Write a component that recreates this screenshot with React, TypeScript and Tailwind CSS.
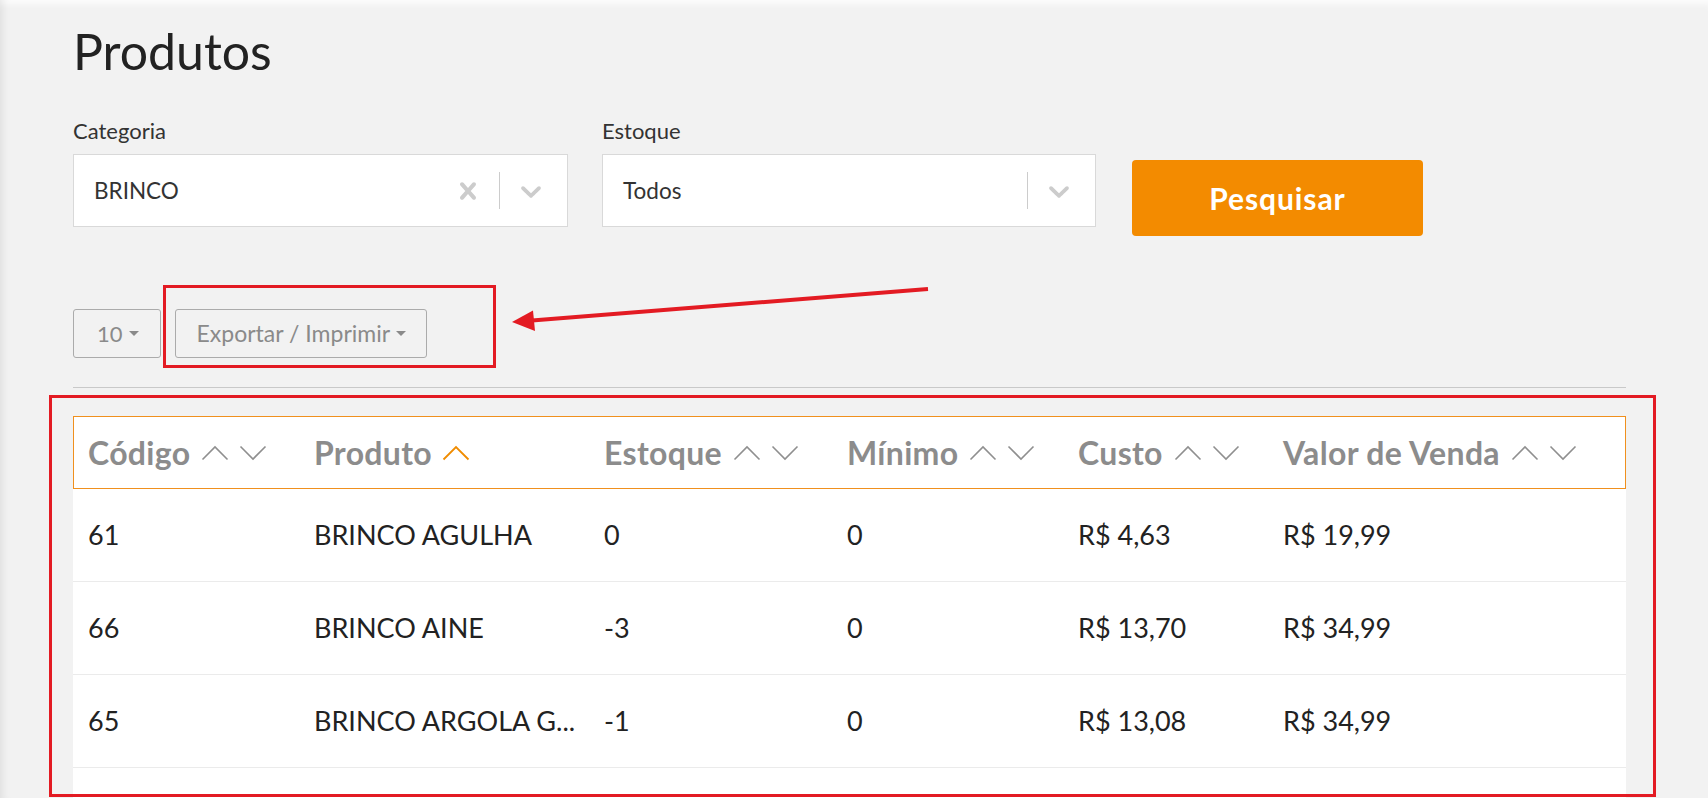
import React from 'react';

interface Produto {
  codigo: string;
  nome: string;
  estoque: string;
  minimo: string;
  custo: string;
  venda: string;
}

const produtos: Produto[] = [
  { codigo: '61', nome: 'BRINCO AGULHA', estoque: '0', minimo: '0', custo: 'R$ 4,63', venda: 'R$ 19,99' },
  { codigo: '66', nome: 'BRINCO AINE', estoque: '-3', minimo: '0', custo: 'R$ 13,70', venda: 'R$ 34,99' },
  { codigo: '65', nome: 'BRINCO ARGOLA G...', estoque: '-1', minimo: '0', custo: 'R$ 13,08', venda: 'R$ 34,99' },
];

const cols = 'grid grid-cols-[226px_290px_243px_231px_205px_1fr]';

function CrossIcon() {
  return (
    <svg viewBox="0 0 20 20" className="w-[34px] h-[34px] fill-[#cccccc]">
      <path d="M14.348 14.849c-0.469 0.469-1.229 0.469-1.697 0l-2.651-3.030-2.651 3.029c-0.469 0.469-1.229 0.469-1.697 0-0.469-0.469-0.469-1.229 0-1.697l2.758-3.15-2.759-3.152c-0.469-0.469-0.469-1.228 0-1.697s1.228-0.469 1.697 0l2.652 3.031 2.651-3.031c0.469-0.469 1.228-0.469 1.697 0s0.469 1.229 0 1.697l-2.758 3.152 2.758 3.15c0.469 0.469 0.469 1.229 0 1.698z" />
    </svg>
  );
}

function ChevronIcon() {
  return (
    <svg viewBox="0 0 20 20" className="w-[34px] h-[34px] fill-[#cccccc]">
      <path d="M4.516 7.548c0.436-0.446 1.043-0.481 1.576 0l3.908 3.747 3.908-3.747c0.533-0.481 1.141-0.446 1.574 0 0.436 0.445 0.408 1.197 0 1.615-0.406 0.418-4.695 4.502-4.695 4.502-0.217 0.223-0.502 0.335-0.787 0.335s-0.57-0.112-0.789-0.335c0 0-4.287-4.084-4.695-4.502s-0.436-1.17 0-1.615z" />
    </svg>
  );
}

function SortIcons({ active }: { active?: boolean }) {
  if (active) {
    return (
      <svg viewBox="0 0 28 16" className="w-[28px] h-[16px] ml-[10px]" fill="none">
        <polyline points="1.5,14.5 14,2 26.5,14.5" stroke="#f08c00" strokeWidth="1.8" />
      </svg>
    );
  }
  return (
    <span className="flex items-center gap-[10px] ml-[11px]">
      <svg viewBox="0 0 28 16" className="w-[28px] h-[16px]" fill="none">
        <polyline points="1.5,14.5 14,2 26.5,14.5" stroke="#8f8f8f" strokeWidth="1.6" />
      </svg>
      <svg viewBox="0 0 28 16" className="w-[28px] h-[16px]" fill="none">
        <polyline points="1.5,1.5 14,14 26.5,1.5" stroke="#8f8f8f" strokeWidth="1.6" />
      </svg>
    </span>
  );
}

function Caret() {
  return <span className="ml-[6px] inline-block w-0 h-0 border-x-[5px] border-x-transparent border-t-[5px] border-t-[#8a8a8a]" />;
}

function SelectBox({ value, clearable }: { value: string; clearable?: boolean }) {
  return (
    <div className="h-[73px] bg-white border border-[#d9d9d9] flex items-center pl-[20px] pr-[19px]">
      <span className="flex-1 text-[22.5px] text-[#333]">{value}</span>
      {clearable && <CrossIcon />}
      <span className="mx-[14px] w-px h-[37px] bg-[#cccccc]" />
      <ChevronIcon />
    </div>
  );
}

export default function App() {
  const headers = ['Código', 'Produto', 'Estoque', 'Mínimo', 'Custo', 'Valor de Venda'];

  return (
    <div className="relative h-[798px] w-full overflow-hidden bg-[#f2f2f2] font-[Lato,'Liberation_Sans',sans-serif] shadow-[inset_10px_0_10px_-8px_rgba(0,0,0,0.09),inset_0_8px_6px_-4px_rgba(255,255,255,0.8)]">
      <div className="pl-[73px] pr-[82px] pt-[21px]">
        <h1 className="text-[50px] leading-[1.2] text-[#222]">Produtos</h1>

        {/* filtros */}
        <div className="mt-[38px] flex items-start">
          <div className="w-[495px]">
            <label className="block text-[22px] leading-[24px] text-[#333] mb-[11px]">Categoria</label>
            <SelectBox value="BRINCO" clearable />
          </div>
          <div className="w-[494px] ml-[34px]">
            <label className="block text-[22px] leading-[24px] text-[#333] mb-[11px]">Estoque</label>
            <SelectBox value="Todos" />
          </div>
          <button className="ml-[36px] mt-[41px] w-[291px] h-[76px] rounded-[4px] bg-[#f38b00] text-white text-[30px] font-bold tracking-[0.03em]">
            Pesquisar
          </button>
        </div>

        {/* toolbar */}
        <div className="mt-[73px] flex gap-[14px]">
          <button className="h-[49px] flex items-center pl-[23px] pr-[21px] border border-[#ababab] rounded-[3px] text-[22px] text-[#8a8a8a]">
            10<Caret />
          </button>
          <button className="h-[49px] flex items-center pl-[21px] pr-[20px] border border-[#ababab] rounded-[3px] text-[23px] text-[#8a8a8a]">
            Exportar / Imprimir<Caret />
          </button>
        </div>

        <div className="mt-[29px] h-px bg-[#c9c9c9]" />

        {/* tabela */}
        <div className="mt-[28px]">
          <div className={`${cols} h-[73px] bg-white border border-[#f0901e] items-center`}>
            {headers.map((h, i) => (
              <div key={h} className="flex items-center pl-[14px] text-[32px] font-bold tracking-[0.01em] text-[#8c8c8c]">
                {h}
                <SortIcons active={i === 1} />
              </div>
            ))}
          </div>
          {produtos.map((p) => (
            <div key={p.codigo} className={`${cols} h-[93px] bg-white border-b border-[#ebebeb] items-center text-[27px] text-[#222]`}>
              <div className="pl-[15px]">{p.codigo}</div>
              <div className="pl-[15px] whitespace-nowrap">{p.nome}</div>
              <div className="pl-[15px]">{p.estoque}</div>
              <div className="pl-[15px]">{p.minimo}</div>
              <div className="pl-[15px]">{p.custo}</div>
              <div className="pl-[15px]">{p.venda}</div>
            </div>
          ))}
          <div className="h-[93px] bg-white" />
        </div>
      </div>

      {/* anotações */}
      <div className="absolute left-[163px] top-[285px] w-[333px] h-[83px] border-[3px] border-[#e31b23]" />
      <div className="absolute left-[49px] top-[395px] w-[1607px] h-[402px] border-[3px] border-[#e31b23]" />
      <svg className="absolute left-[500px] top-[280px] w-[440px] h-[60px]" viewBox="0 0 440 60">
        <line x1="428" y1="9" x2="32" y2="40.4" stroke="#e31b23" strokeWidth="4" />
        <polygon points="12,42 33,30.5 35,51" fill="#e31b23" />
      </svg>
    </div>
  );
}
